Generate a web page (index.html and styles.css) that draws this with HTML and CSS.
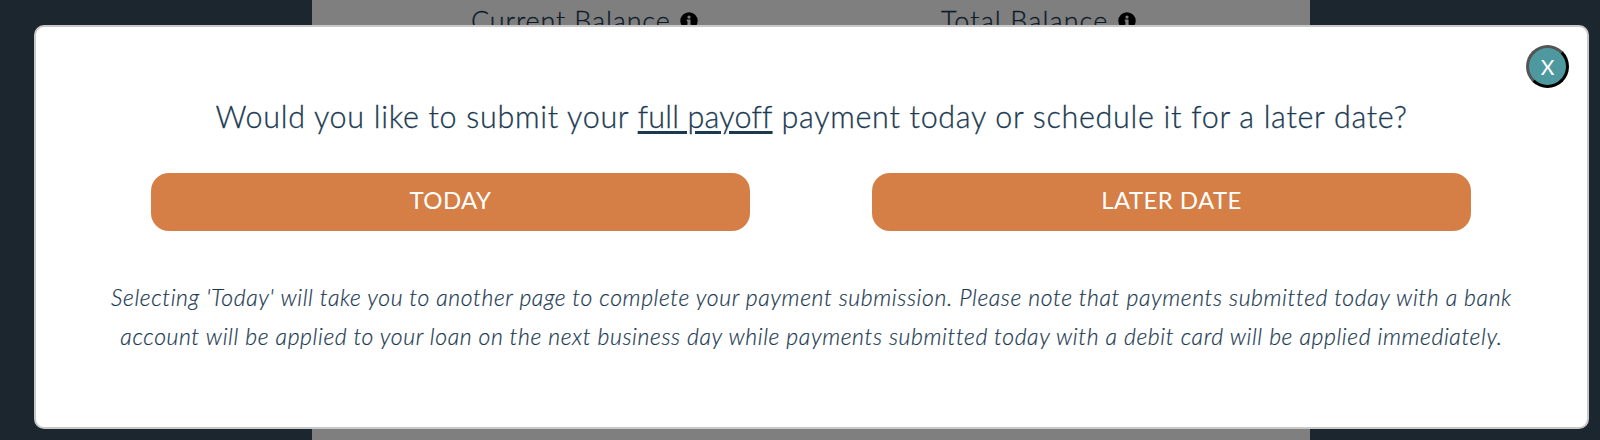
FILE: index.html
```html
<!DOCTYPE html>
<html lang="en">
  <head>
    <meta charset="UTF-8" />
    <meta name="viewport" content="width=device-width, initial-scale=1.0" />
    <title>Payoff Payment</title>
    <link rel="stylesheet" href="styles.css">
  </head>
  <body>
    <div class="page">
      <div class="balance current">
        <span>Current Balance</span>
        <svg class="info" viewBox="0 0 512 512"><path fill-rule="evenodd" d="M256 8a248 248 0 1 0 0 496a248 248 0 1 0 0-496zM256 98a46 46 0 1 1 0 92a46 46 0 1 1 0-92zM192 212h108v148h24v52H188v-52h24v-96h-20z" /></svg>
      </div>
      <div class="balance total">
        <span>Total Balance</span>
        <svg class="info" viewBox="0 0 512 512"><path fill-rule="evenodd" d="M256 8a248 248 0 1 0 0 496a248 248 0 1 0 0-496zM256 98a46 46 0 1 1 0 92a46 46 0 1 1 0-92zM192 212h108v148h24v52H188v-52h24v-96h-20z" /></svg>
      </div>
    </div>

    <div class="overlay">
      <div class="modal">
        <button class="close">X</button>
        <h2>Would you like to submit your <u>full payoff</u> payment today or schedule it for a later date?</h2>
        <div class="buttons">
          <button class="option">TODAY</button>
          <button class="option">LATER DATE</button>
        </div>
        <p class="note">
          Selecting 'Today' will take you to another page to complete your payment submission. Please note that payments submitted today with a bank<br />
          account will be applied to your loan on the next business day while payments submitted today with a debit card will be applied immediately.
        </p>
      </div>
    </div>
  </body>
</html>
```

FILE: styles.css
```css
* {
  box-sizing: border-box;
}
body {
  margin: 0;
  height: 440px;
  overflow: hidden;
  background-color: #394c5d;
  font-family: "Lato", "Open Sans", sans-serif;
  font-weight: 300;
  color: #1b3a52;
}
.page {
  display: flex;
  width: 998px;
  height: 440px;
  margin-left: 312px;
  padding-top: 4px;
  background-color: #ffffff;
}
.balance {
  display: flex;
  align-items: center;
  gap: 9px;
  height: 34px;
  font-size: 27px;
  letter-spacing: 0.85px;
  white-space: nowrap;
  -webkit-text-stroke: 0.3px #1b3a52;
}
.balance span {
  margin-top: -2px;
}
.current {
  width: 470px;
  margin-left: 159px;
}
.total {
  gap: 10px;
  letter-spacing: 1.1px;
}
.info {
  width: 18px;
  height: 18px;
  fill: #000000;
}
.overlay {
  position: fixed;
  inset: 0;
  padding: 25px 0 0 34px;
  background-color: rgba(0, 0, 0, 0.5);
}
.modal {
  position: relative;
  width: 1555px;
  height: 404px;
  padding: 66px 0 0;
  border: 2px solid #c8c8c8;
  border-radius: 10px;
  background-color: #ffffff;
  text-align: center;
}
.close {
  position: absolute;
  top: 18px;
  right: 18px;
  width: 43px;
  height: 43px;
  padding: 0;
  border: 3.5px outset #000000;
  border-radius: 50%;
  background-color: #4d999f;
  color: #ffffff;
  font-family: inherit;
  font-size: 21px;
}
h2 {
  margin: 0;
  font-size: 30.5px;
  font-weight: 300;
  letter-spacing: 0.7px;
  line-height: 46px;
  white-space: nowrap;
  -webkit-text-stroke: 0.3px #1b3a52;
}
u {
  letter-spacing: 0.2px;
  text-decoration-thickness: 2.5px;
  text-underline-offset: 3px;
}
.buttons {
  display: flex;
  justify-content: center;
  gap: 122px;
  margin-top: 34px;
  padding-right: 1px;
}
.option {
  width: 599px;
  height: 58px;
  padding: 0 0 5px;
  border: none;
  border-radius: 18px;
  background-color: #d57f46;
  color: #ffffff;
  font-family: inherit;
  font-size: 24px;
  font-weight: 400;
  letter-spacing: 0.4px;
}
.note {
  margin: 47px 0 0;
  font-size: 23px;
  font-style: italic;
  letter-spacing: 0.6px;
  line-height: 39px;
  white-space: nowrap;
  -webkit-text-stroke: 0.2px #1b3a52;
}
```
